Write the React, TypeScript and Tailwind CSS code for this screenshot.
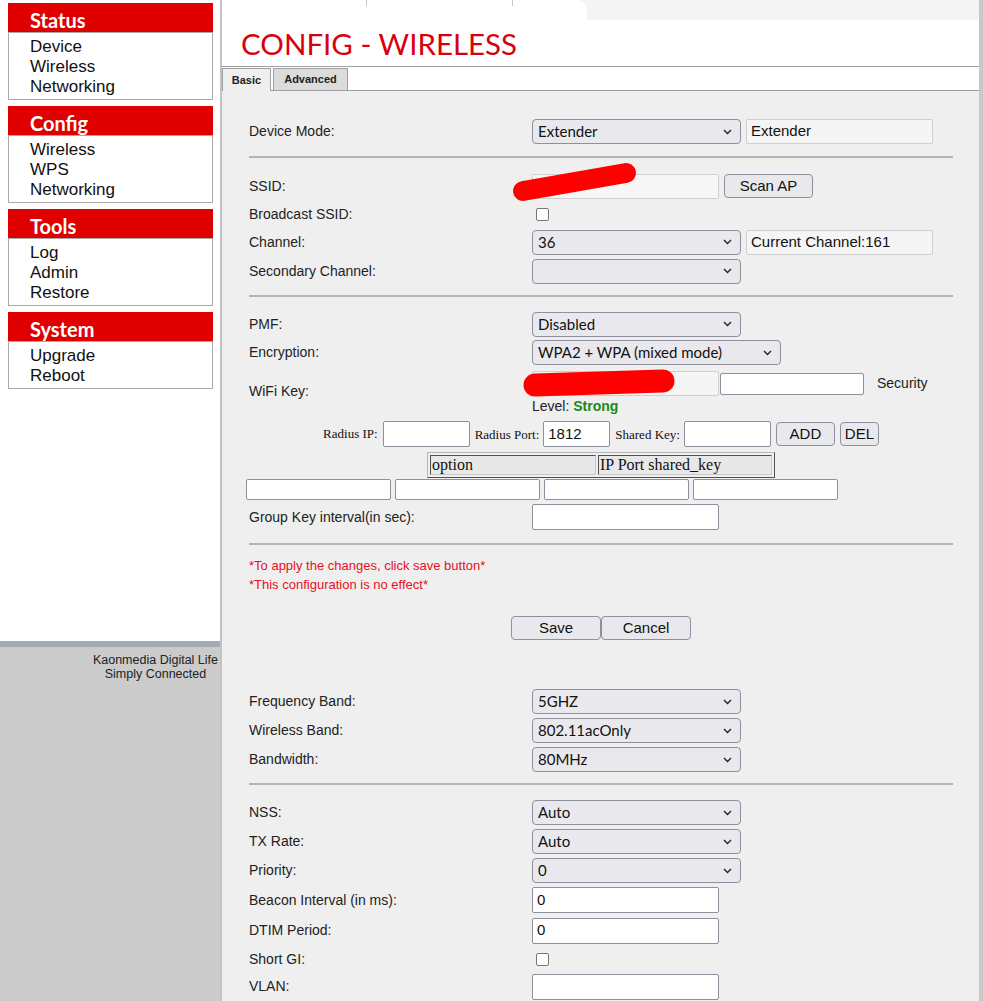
import React from 'react';
import clsx from 'clsx';

const Chevron = () => (
  <svg width="9" height="6" viewBox="0 0 9 6">
    <path d="M1 1l3.5 3.5L8 1" fill="none" stroke="#222" strokeWidth="1.4" />
  </svg>
);

const Select = ({ value, className }: { value?: string; className?: string }) => (
  <div
    className={clsx(
      "flex h-[25px] items-center justify-between rounded-[4px] border border-[#8f8f9d] bg-[#e9e9ed] pl-[5px] pr-[8px] font-['Lato',sans-serif] text-[15px] text-[#111]",
      className ?? 'w-[209px]'
    )}
  >
    <span>{value}</span>
    <Chevron />
  </div>
);

const TextBox = ({ value, className }: { value?: string; className?: string }) => (
  <div
    className={clsx(
      "flex items-center rounded-[2px] border pl-[4px] font-['Liberation_Sans',Arial,sans-serif] text-[15px] text-[#111]",
      className ?? 'h-[26px] w-[187px] border-[#8f8f9d] bg-white'
    )}
  >
    {value}
  </div>
);

const Check = () => (
  <div className="ml-[4px] h-[13px] w-[13px] rounded-[2px] border border-[#767676] bg-white" />
);

const Btn = ({ children, className }: { children: React.ReactNode; className?: string }) => (
  <div
    className={clsx(
      "flex h-[24px] items-center justify-center rounded-[4px] border border-[#8f8f9d] bg-[#e9e9ed] font-['Liberation_Sans',Arial,sans-serif] text-[15px] text-[#111]",
      className
    )}
  >
    {children}
  </div>
);

const Row = ({ label, h, children }: { label: string; h: string; children?: React.ReactNode }) => (
  <div className={clsx('flex items-center', h)}>
    <div className="w-[283px] shrink-0">{label}</div>
    {children}
  </div>
);

const Rule = ({ className }: { className: string }) => <div className={clsx('h-[2px] bg-[#b4b4b8]', className)} />;

const MenuBox = ({ title, items }: { title: string; items: string[] }) => (
  <div className="w-[205px]">
    <div className="h-[29px] bg-[#e10000] pl-[22px] pt-[2px] font-['Lato',sans-serif] text-[20px] font-bold leading-[31px] text-white">
      {title}
    </div>
    <div className="border border-[#a9a9a9] pb-[2px] pl-[21px] pt-[4px] text-[17px] leading-[20px] text-[#111]">
      {items.map((item) => (
        <div key={item}>{item}</div>
      ))}
    </div>
  </div>
);

const Serif = ({ children }: { children: React.ReactNode }) => (
  <span className="font-['Liberation_Serif','Times_New_Roman',serif] text-[13px] text-[#111]">{children}</span>
);

export default function App() {
  return (
    <div className="flex h-[1001px] w-[983px] overflow-hidden bg-white font-['Liberation_Sans',Arial,sans-serif]">
      {/* left menu */}
      <div className="flex w-[220px] shrink-0 flex-col">
        <div className="flex h-[641px] flex-col gap-[6px] bg-white pl-[8px] pt-[3px]">
          <MenuBox title="Status" items={['Device', 'Wireless', 'Networking']} />
          <MenuBox title="Config" items={['Wireless', 'WPS', 'Networking']} />
          <MenuBox title="Tools" items={['Log', 'Admin', 'Restore']} />
          <MenuBox title="System" items={['Upgrade', 'Reboot']} />
        </div>
        <div className="h-[6px] bg-[#a3acb5]" />
        <div className="flex flex-1 justify-end bg-[#cbcbcb] pr-[2px] pt-[6px]">
          <div className="text-center text-[12.5px] leading-[14px] text-[#222]">
            <div>Kaonmedia Digital Life</div>
            <div>Simply Connected</div>
          </div>
        </div>
      </div>
      <div className="w-[2px] shrink-0 bg-[#c2c2c2]" />

      {/* main */}
      <div className="flex flex-1 flex-col border-r-[4px] border-[#c8c8c8]">
        <div className="flex h-[20px] bg-[#f4f4f4]">
          <div className="w-[365px] rounded-tr-[10px] bg-white">
            <div className="flex h-[6px]">
              <div className="w-[145px] border-r border-[#c4c4c4]" />
              <div className="w-[146px] border-r border-[#c4c4c4]" />
            </div>
          </div>
        </div>
        <div className="h-[47px] border-b border-[#a0a0a0] bg-white pl-[19px] pt-[4px] font-['Lato',sans-serif] text-[29.5px] leading-[40px] text-[#d9000d]">
          CONFIG - WIRELESS
        </div>
        <div className="flex h-[24px] items-end bg-white text-[11px] font-bold text-[#222]">
          <div className="flex h-[23px] w-[49px] items-center justify-center border-x border-t border-[#a0a0a0] bg-[#efefef]">
            Basic
          </div>
          <div className="h-[23px] w-[2px] border-b border-[#a0a0a0]" />
          <div className="flex h-[23px] w-[75px] items-center justify-center border border-[#a0a0a0] bg-[#dcdcdc]">
            Advanced
          </div>
          <div className="h-[23px] flex-1 border-b border-[#a0a0a0]" />
        </div>

        <div className="flex flex-1 flex-col bg-[#efefef] pl-[27px] pr-[26px] text-[14px] text-[#222]">
          <div className="h-[26px]" />
          <Row label="Device Mode:" h="h-[29px]">
            <Select value="Extender" />
            <TextBox
              value="Extender"
              className="ml-[5px] h-[25px] w-[187px] border-[#cfcfcf] bg-[#f5f5f5] font-['Lato',sans-serif]"
            />
          </Row>
          <Rule className="mb-[14px] mt-[10px]" />
          <Row label="SSID:" h="h-[28px]">
            <div className="relative">
              <TextBox className="h-[25px] w-[187px] border-[#cfcfcf] bg-[#f7f7f7]" />
              <svg className="absolute left-[-24px] top-[-20px]" width="140" height="60" viewBox="0 0 140 60">
                <line x1="15" y1="37" x2="118" y2="19" stroke="#ff0000" strokeWidth="20" strokeLinecap="round" />
              </svg>
            </div>
            <Btn className="ml-[5px] w-[89px]">Scan AP</Btn>
          </Row>
          <Row label="Broadcast SSID:" h="h-[28px]">
            <Check />
          </Row>
          <Row label="Channel:" h="h-[28px]">
            <Select value="36" />
            <TextBox
              value="Current Channel:161"
              className="ml-[5px] h-[25px] w-[187px] border-[#cfcfcf] bg-[#f5f5f5] font-['Lato',sans-serif]"
            />
          </Row>
          <Row label="Secondary Channel:" h="h-[30px]">
            <Select />
          </Row>
          <Rule className="mb-[13px] mt-[9px]" />
          <Row label="PMF:" h="h-[28px]">
            <Select value="Disabled" />
          </Row>
          <Row label="Encryption:" h="h-[29px]">
            <Select value="WPA2 + WPA (mixed mode)" className="w-[249px]" />
          </Row>
          <div className="flex h-[49px]">
            <div className="flex w-[283px] shrink-0 items-center">WiFi Key:</div>
            <div className="pt-[4px]">
              <div className="flex items-center">
                <div className="relative">
                  <TextBox className="h-[25px] w-[187px] border-[#cfcfcf] bg-[#f5f5f5]" />
                  <svg className="absolute left-[-15px] top-[-5px]" width="170" height="35" viewBox="0 0 170 35">
                    <line x1="18" y1="19" x2="146" y2="15" stroke="#ff0000" strokeWidth="23" strokeLinecap="round" />
                  </svg>
                </div>
                <TextBox className="ml-[1px] h-[22px] w-[144px] border-[#8f8f9d] bg-white" />
                <span className="ml-[13px]">Security</span>
              </div>
              <div className="h-[20px] leading-[20px]">
                Level: <span className="font-bold text-[#1a8a1a]">Strong</span>
              </div>
            </div>
          </div>
          <div className="mt-[5px] flex h-[26px] items-center justify-center">
            <Serif>Radius IP:</Serif>
            <TextBox className="ml-[5px] h-[26px] w-[87px] border-[#8f8f9d] bg-white" />
            <span className="ml-[5px]">
              <Serif>Radius Port:</Serif>
            </span>
            <TextBox value="1812" className="ml-[4px] h-[26px] w-[67px] border-[#8f8f9d] bg-white" />
            <span className="ml-[5px]">
              <Serif>Shared Key:</Serif>
            </span>
            <TextBox className="ml-[4px] h-[26px] w-[87px] border-[#8f8f9d] bg-white" />
            <Btn className="ml-[5px] w-[59px]">ADD</Btn>
            <Btn className="ml-[5px] w-[39px]">DEL</Btn>
          </div>
          <div className="mt-[5px] flex justify-center">
            <div className="flex h-[26px] w-[348px] gap-[2px] border border-b-[#505050] border-l-[#b8b8b8] border-r-[#505050] border-t-[#b8b8b8] p-[2px] font-['Liberation_Serif','Times_New_Roman',serif] text-[16px] leading-[18px] text-[#111]">
              <div className="w-[166px] border border-b-[#c8c8c8] border-l-[#505050] border-r-[#c8c8c8] border-t-[#505050] bg-[#e8e8e8] pl-[1px]">
                option
              </div>
              <div className="flex-1 border border-b-[#c8c8c8] border-l-[#505050] border-r-[#c8c8c8] border-t-[#505050] bg-[#e8e8e8] pl-[1px]">
                IP Port shared_key
              </div>
            </div>
          </div>
          <div className="-ml-[3px] mt-[1px] flex h-[21px] gap-[4px]">
            <TextBox className="h-[21px] w-[145px] border-[#8f8f9d] bg-white" />
            <TextBox className="h-[21px] w-[145px] border-[#8f8f9d] bg-white" />
            <TextBox className="h-[21px] w-[145px] border-[#8f8f9d] bg-white" />
            <TextBox className="h-[21px] w-[145px] border-[#8f8f9d] bg-white" />
          </div>
          <Row label="Group Key interval(in sec):" h="mt-[4px] h-[26px]">
            <TextBox />
          </Row>
          <Rule className="mt-[13px]" />
          <div className="mt-[11px] text-[13px] leading-[19px] text-[#e8101e]">
            <div>*To apply the changes, click save button*</div>
            <div>*This configuration is no effect*</div>
          </div>
          <div className="mt-[22px] flex justify-center">
            <Btn className="w-[90px]">Save</Btn>
            <Btn className="w-[90px]">Cancel</Btn>
          </div>
          <div className="h-[47px]" />
          <Row label="Frequency Band:" h="h-[29px]">
            <Select value="5GHZ" />
          </Row>
          <Row label="Wireless Band:" h="h-[29px]">
            <Select value="802.11acOnly" />
          </Row>
          <Row label="Bandwidth:" h="h-[29px]">
            <Select value="80MHz" />
          </Row>
          <Rule className="mb-[13px] mt-[9px]" />
          <Row label="NSS:" h="h-[29px]">
            <Select value="Auto" />
          </Row>
          <Row label="TX Rate:" h="h-[29px]">
            <Select value="Auto" />
          </Row>
          <Row label="Priority:" h="h-[29px]">
            <Select value="0" />
          </Row>
          <Row label="Beacon Interval (in ms):" h="h-[30px]">
            <TextBox value="0" />
          </Row>
          <Row label="DTIM Period:" h="h-[31px]">
            <TextBox value="0" />
          </Row>
          <Row label="Short GI:" h="h-[27px]">
            <Check />
          </Row>
          <Row label="VLAN:" h="h-[27px]">
            <TextBox />
          </Row>
        </div>
      </div>
    </div>
  );
}
